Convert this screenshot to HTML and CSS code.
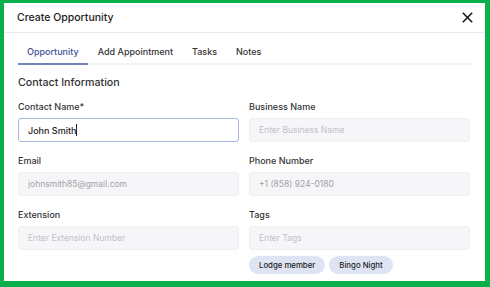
FILE: index.html
```html
<!DOCTYPE html>
<html lang="en">
<head>
  <meta charset="UTF-8">
  <meta name="viewport" content="width=device-width, initial-scale=1.0">
  <title>Create Opportunity</title>
  <link rel="stylesheet" href="styles.css">
</head>
<body>

  <div class="modal">
    <div class="modal-header">
      <h1 class="modal-title">Create Opportunity</h1>
      <button class="close-btn" aria-label="Close">
        <svg width="11" height="11" viewBox="0 0 11 11">
          <path d="M0.8 0.8 L10.2 10.2 M10.2 0.8 L0.8 10.2" stroke="#111" stroke-width="1.5" fill="none" />
        </svg>
      </button>
    </div>

    <div class="modal-body">
      <nav class="tabs">
        <a class="tab active">Opportunity</a>
        <a class="tab">Add Appointment</a>
        <a class="tab">Tasks</a>
        <a class="tab">Notes</a>
      </nav>

      <h2 class="section-title">Contact Information</h2>

      <div class="form-grid">
        <div class="field">
          <label for="contactName">Contact Name*</label>
          <div class="input focused">John Smith<span class="caret"></span></div>
        </div>
        <div class="field">
          <label for="businessName">Business Name</label>
          <input type="text" id="businessName" placeholder="Enter Business Name" />
        </div>
        <div class="field">
          <label for="email">Email</label>
          <input type="text" id="email" class="filled" placeholder="johnsmith85@gmail.com" />
        </div>
        <div class="field">
          <label for="phone">Phone Number</label>
          <input type="text" id="phone" class="filled" placeholder="+1 (858) 924-0180" />
        </div>
        <div class="field">
          <label for="extension">Extension</label>
          <input type="text" id="extension" placeholder="Enter Extension Number" />
        </div>
        <div class="field">
          <label for="tags">Tags</label>
          <input type="text" id="tags" placeholder="Enter Tags" />
          <div class="chips">
            <span class="chip">Lodge member</span>
            <span class="chip">Bingo Night</span>
          </div>
        </div>
      </div>
    </div>
  </div>

</body>
</html>
```

FILE: styles.css
```css
html, body {
  height: 100%;
}

body {
  margin: 0;
  font-family: 'Inter', 'Noto Sans', sans-serif;
  color: #2e2e2e;
  background: #fff;
}

.modal {
  box-sizing: border-box;
  height: 287px;
  border-style: solid;
  border-color: #0bb04b;
  border-width: 3px 5px 6px 4px;
  background: #fff;
  overflow: hidden;
}

.modal-header {
  display: flex;
  align-items: center;
  justify-content: space-between;
  height: 29px;
  padding: 0 12px 0 13px;
  border-bottom: 1px solid #e6eaf2;
}

.modal-title {
  margin: 0;
  font-size: 10.5px;
  font-weight: 500;
  color: #222;
}

.close-btn {
  border: none;
  background: none;
  padding: 0;
  display: flex;
  cursor: pointer;
}

.modal-body {
  padding: 0 12px 0 14px;
}

.tabs {
  display: flex;
  margin-top: 7px;
  border-bottom: 2px solid #f0f1f4;
}

.tab {
  font-size: 9px;
  font-weight: 500;
  color: #333;
  padding: 6px 9px 6px 9px;
  margin-right: 1px;
  margin-bottom: -2px;
  border-bottom: 2px solid transparent;
}

.tab.active {
  color: #3e5294;
  border-bottom-color: #7182b8;
}

.section-title {
  margin: 11px 0 0 0;
  font-size: 10.7px;
  font-weight: 500;
  color: #333;
}

.form-grid {
  display: grid;
  grid-template-columns: 221px 221px;
  column-gap: 10px;
  row-gap: 13px;
  margin-top: 12px;
}

.field label {
  display: block;
  font-size: 9px;
  font-weight: 500;
  color: #333;
  margin-bottom: 6px;
}

input, .input {
  box-sizing: border-box;
  display: flex;
  align-items: center;
  width: 100%;
  height: 24px;
  padding: 0 9px;
  font-family: inherit;
  font-size: 8.5px;
  border: 1px solid #efeff2;
  border-radius: 3px;
  background: #f6f6f8;
  color: #333;
  outline: none;
}

input::placeholder {
  color: #c0c3c9;
}

input.filled::placeholder {
  color: #a0a2a6;
}

.input.focused {
  background: #fff;
  border-color: #a8b7dc;
  color: #222;
  font-size: 9px;
  font-weight: 500;
}

.caret {
  display: inline-block;
  width: 1px;
  height: 12px;
  background: #222;
}

.chips {
  display: flex;
  gap: 4px;
  margin-top: 6px;
}

.chip {
  font-size: 7.8px;
  font-weight: 500;
  color: #222;
  background: #dfe4f4;
  border-radius: 9px;
  padding: 4px 10px;
}
```
